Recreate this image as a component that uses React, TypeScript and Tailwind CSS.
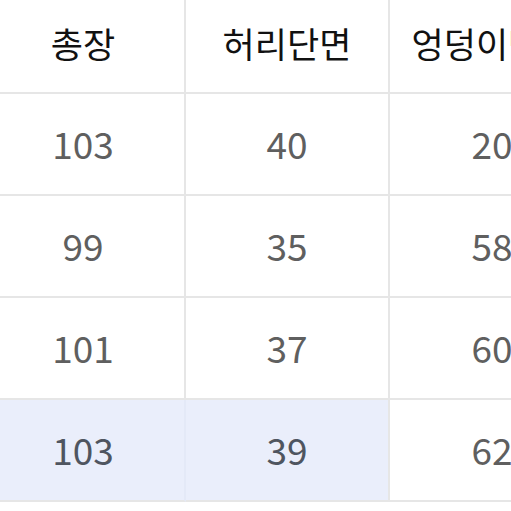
const header = ['총장', '허리단면', '엉덩이단면']

const rows = [
    ['103', '40', '20'],
    ['99', '35', '58'],
    ['101', '37', '60'],
    ['103', '39', '62'],
]

export default function App() {
    return (
        <div className="w-[511px] h-[511px] overflow-hidden bg-white" style={{ fontFamily: '"Noto Sans CJK KR", "Noto Sans", sans-serif' }}>
            <div className="-ml-[18px] w-[612px]">
                {/* Header */}
                <div className="grid grid-cols-[204px_204px_204px]">
                    {header.map((h, i) => (
                        <div
                            key={h}
                            className={`h-[94px] pb-[6px] flex items-center justify-center border-b-2 border-[#e6e6e6] text-[35px] text-[#111] whitespace-nowrap ${i < 2 ? 'border-r-2' : ''}`}
                        >
                            {h}
                        </div>
                    ))}
                </div>

                {/* Rows */}
                {rows.map((row, r) => {
                    const last = r === rows.length - 1
                    return (
                        <div key={r} className="grid grid-cols-[204px_204px_204px]">
                            {row.map((v, i) => {
                                const blue = last && i < 2
                                return (
                                    <div
                                        key={i}
                                        className={`h-[102px] flex items-center justify-center border-b-2 border-[#e6e6e6] text-[37px] ${blue ? 'bg-[#eaeefb] text-[#4f5560]' : 'text-[#5f5f5f]'} ${i === 0 ? (last ? 'border-r-2 border-r-[#e4e9f7]' : 'border-r-2') : ''} ${i === 1 ? 'border-r-2' : ''}`}
                                    >
                                        {v}
                                    </div>
                                )
                            })}
                        </div>
                    )
                })}
            </div>
        </div>
    )
}
